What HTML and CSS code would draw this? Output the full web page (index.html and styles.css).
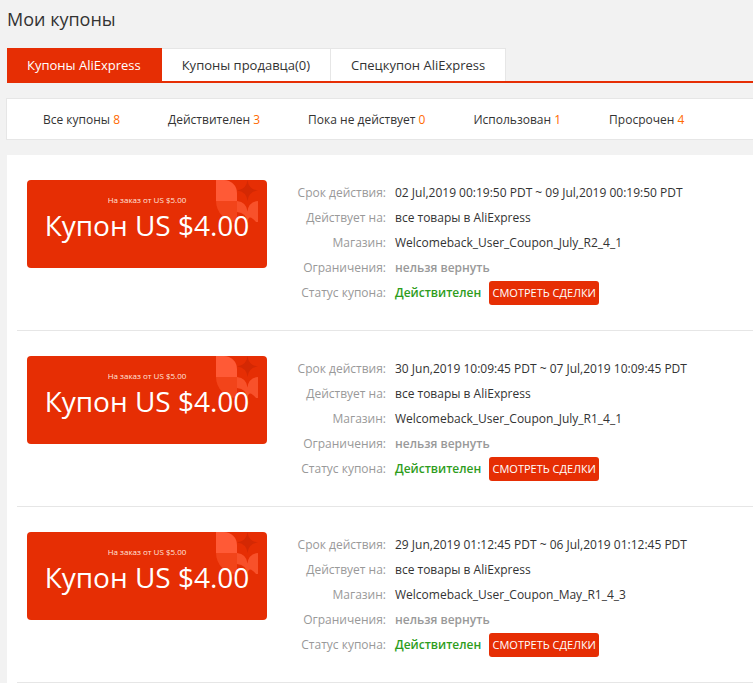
FILE: index.html
```html
<!DOCTYPE html>
<html>

<head>
    <title>Мои купоны</title>
    <meta charset="UTF-8">
    <link rel="stylesheet" href="styles.css">
</head>

<body>
    <div class="page">
        <h1 class="page-title">Мои купоны</h1>

        <div class="tabs">
            <a class="tab active">Купоны AliExpress</a>
            <a class="tab">Купоны продавца(0)</a>
            <a class="tab">Спецкупон AliExpress</a>
        </div>

        <div class="filter-bar">
            <span class="filter">Все купоны <em>8</em></span>
            <span class="filter">Действителен <em>3</em></span>
            <span class="filter">Пока не действует <em>0</em></span>
            <span class="filter">Использован <em>1</em></span>
            <span class="filter">Просрочен <em>4</em></span>
        </div>

        <div class="coupon-list">
            <div class="coupon-item">
                <div class="coupon-card">
                    <svg class="card-deco" width="42" height="42" viewBox="0 0 42 42">
                        <path d="M0 0 H8 A13 13 0 0 1 21 13 V21 H0 Z" fill="#ff5a36" />
                        <path d="M0 21 H21 V42 A21 21 0 0 1 0 21 Z" fill="#f2441a" />
                        <path d="M31.5 0 Q32.5 9.5 42 10.5 Q32.5 11.5 31.5 21 Q30.5 11.5 21 10.5 Q30.5 9.5 31.5 0 Z" fill="#d42803" />
                        <path d="M21 21 Q30.5 22 31.5 31.5 Q32.5 22 42 21 V42 H40 Q32.5 33 31.5 42 Q30.5 33 21 32 Z" fill="#f8512a" />
                    </svg>
                    <div class="card-cond">На заказ от US $5.00</div>
                    <div class="card-amount">Купон US $4.00</div>
                </div>
                <dl class="coupon-info">
                    <div class="info-row"><dt>Срок действия:</dt><dd>02 Jul,2019 00:19:50 PDT ~ 09 Jul,2019 00:19:50 PDT</dd></div>
                    <div class="info-row"><dt>Действует на:</dt><dd>все товары в AliExpress</dd></div>
                    <div class="info-row"><dt>Магазин:</dt><dd>Welcomeback_User_Coupon_July_R2_4_1</dd></div>
                    <div class="info-row"><dt>Ограничения:</dt><dd class="limit">нельзя вернуть</dd></div>
                    <div class="info-row"><dt>Статус купона:</dt><dd class="status-ok">Действителен</dd><button class="deals-btn">Смотреть сделки</button></div>
                </dl>
            </div>

            <div class="coupon-item">
                <div class="coupon-card">
                    <svg class="card-deco" width="42" height="42" viewBox="0 0 42 42">
                        <path d="M0 0 H8 A13 13 0 0 1 21 13 V21 H0 Z" fill="#ff5a36" />
                        <path d="M0 21 H21 V42 A21 21 0 0 1 0 21 Z" fill="#f2441a" />
                        <path d="M31.5 0 Q32.5 9.5 42 10.5 Q32.5 11.5 31.5 21 Q30.5 11.5 21 10.5 Q30.5 9.5 31.5 0 Z" fill="#d42803" />
                        <path d="M21 21 Q30.5 22 31.5 31.5 Q32.5 22 42 21 V42 H40 Q32.5 33 31.5 42 Q30.5 33 21 32 Z" fill="#f8512a" />
                    </svg>
                    <div class="card-cond">На заказ от US $5.00</div>
                    <div class="card-amount">Купон US $4.00</div>
                </div>
                <dl class="coupon-info">
                    <div class="info-row"><dt>Срок действия:</dt><dd>30 Jun,2019 10:09:45 PDT ~ 07 Jul,2019 10:09:45 PDT</dd></div>
                    <div class="info-row"><dt>Действует на:</dt><dd>все товары в AliExpress</dd></div>
                    <div class="info-row"><dt>Магазин:</dt><dd>Welcomeback_User_Coupon_July_R1_4_1</dd></div>
                    <div class="info-row"><dt>Ограничения:</dt><dd class="limit">нельзя вернуть</dd></div>
                    <div class="info-row"><dt>Статус купона:</dt><dd class="status-ok">Действителен</dd><button class="deals-btn">Смотреть сделки</button></div>
                </dl>
            </div>

            <div class="coupon-item">
                <div class="coupon-card">
                    <svg class="card-deco" width="42" height="42" viewBox="0 0 42 42">
                        <path d="M0 0 H8 A13 13 0 0 1 21 13 V21 H0 Z" fill="#ff5a36" />
                        <path d="M0 21 H21 V42 A21 21 0 0 1 0 21 Z" fill="#f2441a" />
                        <path d="M31.5 0 Q32.5 9.5 42 10.5 Q32.5 11.5 31.5 21 Q30.5 11.5 21 10.5 Q30.5 9.5 31.5 0 Z" fill="#d42803" />
                        <path d="M21 21 Q30.5 22 31.5 31.5 Q32.5 22 42 21 V42 H40 Q32.5 33 31.5 42 Q30.5 33 21 32 Z" fill="#f8512a" />
                    </svg>
                    <div class="card-cond">На заказ от US $5.00</div>
                    <div class="card-amount">Купон US $4.00</div>
                </div>
                <dl class="coupon-info">
                    <div class="info-row"><dt>Срок действия:</dt><dd>29 Jun,2019 01:12:45 PDT ~ 06 Jul,2019 01:12:45 PDT</dd></div>
                    <div class="info-row"><dt>Действует на:</dt><dd>все товары в AliExpress</dd></div>
                    <div class="info-row"><dt>Магазин:</dt><dd>Welcomeback_User_Coupon_May_R1_4_3</dd></div>
                    <div class="info-row"><dt>Ограничения:</dt><dd class="limit">нельзя вернуть</dd></div>
                    <div class="info-row"><dt>Статус купона:</dt><dd class="status-ok">Действителен</dd><button class="deals-btn">Смотреть сделки</button></div>
                </dl>
            </div>
        </div>
    </div>
</body>

</html>
```

FILE: styles.css
```css
body {
    margin: 0;
    background-color: #f2f2f2;
    font-family: "Open Sans", Arial, sans-serif;
    color: #333;
    overflow: hidden;
}

.page {
    width: 1000px;
    padding-left: 7px;
}

.page-title {
    margin: 0;
    height: 48px;
    padding-top: 7px;
    box-sizing: border-box;
    font-size: 18px;
    font-weight: normal;
    line-height: 24px;
}

.tabs {
    display: flex;
    border-bottom: 2px solid #e62e04;
}

.tab {
    padding: 0 20px;
    line-height: 33px;
    font-size: 13px;
    background-color: #fff;
    border-right: 1px solid #e6e6e6;
    border-top: 1px solid #e6e6e6;
    box-sizing: border-box;
    height: 33px;
}

.tab.active {
    background-color: #e62e04;
    border-color: #e62e04;
    color: #fff;
}

.filter-bar {
    margin: 15px 0 0 -1px;
    height: 40px;
    display: flex;
    align-items: center;
    gap: 48px;
    padding-left: 36px;
    background-color: #fff;
    border: 1px solid #e6e6e6;
    font-size: 12px;
}

.filter em {
    font-style: normal;
    color: #ff6a00;
}

.coupon-list {
    margin-top: 15px;
    background-color: #fff;
}

.coupon-item {
    display: flex;
    margin-left: 10px;
    padding: 25px 0 25px 10px;
    border-bottom: 1px solid #e6e6e6;
}

.coupon-card {
    position: relative;
    width: 240px;
    height: 88px;
    flex-shrink: 0;
    background-color: #e62e04;
    border-radius: 4px;
    color: #fff;
    text-align: center;
}

.card-deco {
    position: absolute;
    top: 0;
    right: 9px;
}

.card-cond {
    position: relative;
    padding-top: 15px;
    font-size: 8px;
    line-height: 10px;
    color: #ffe3dc;
}

.card-amount {
    position: relative;
    padding-top: 2px;
    font-size: 28px;
    line-height: 36px;
}

.coupon-info {
    margin: 0 0 0 19px;
    font-size: 12px;
}

.info-row {
    display: flex;
    align-items: center;
    height: 25px;
}

.info-row dt {
    width: 100px;
    margin-right: 9px;
    text-align: right;
    color: #999;
}

.info-row dd {
    margin: 0;
}

.limit {
    color: #999;
    font-weight: 600;
}

.status-ok {
    color: #2e9d1c;
    font-weight: 600;
}

.deals-btn {
    margin-left: 8px;
    width: 110px;
    height: 24px;
    padding: 0;
    border: none;
    border-radius: 3px;
    background-color: #e62e04;
    color: #fff;
    font-family: "Open Sans", Arial, sans-serif;
    font-size: 11px;
    text-transform: uppercase;
    cursor: pointer;
}
```
